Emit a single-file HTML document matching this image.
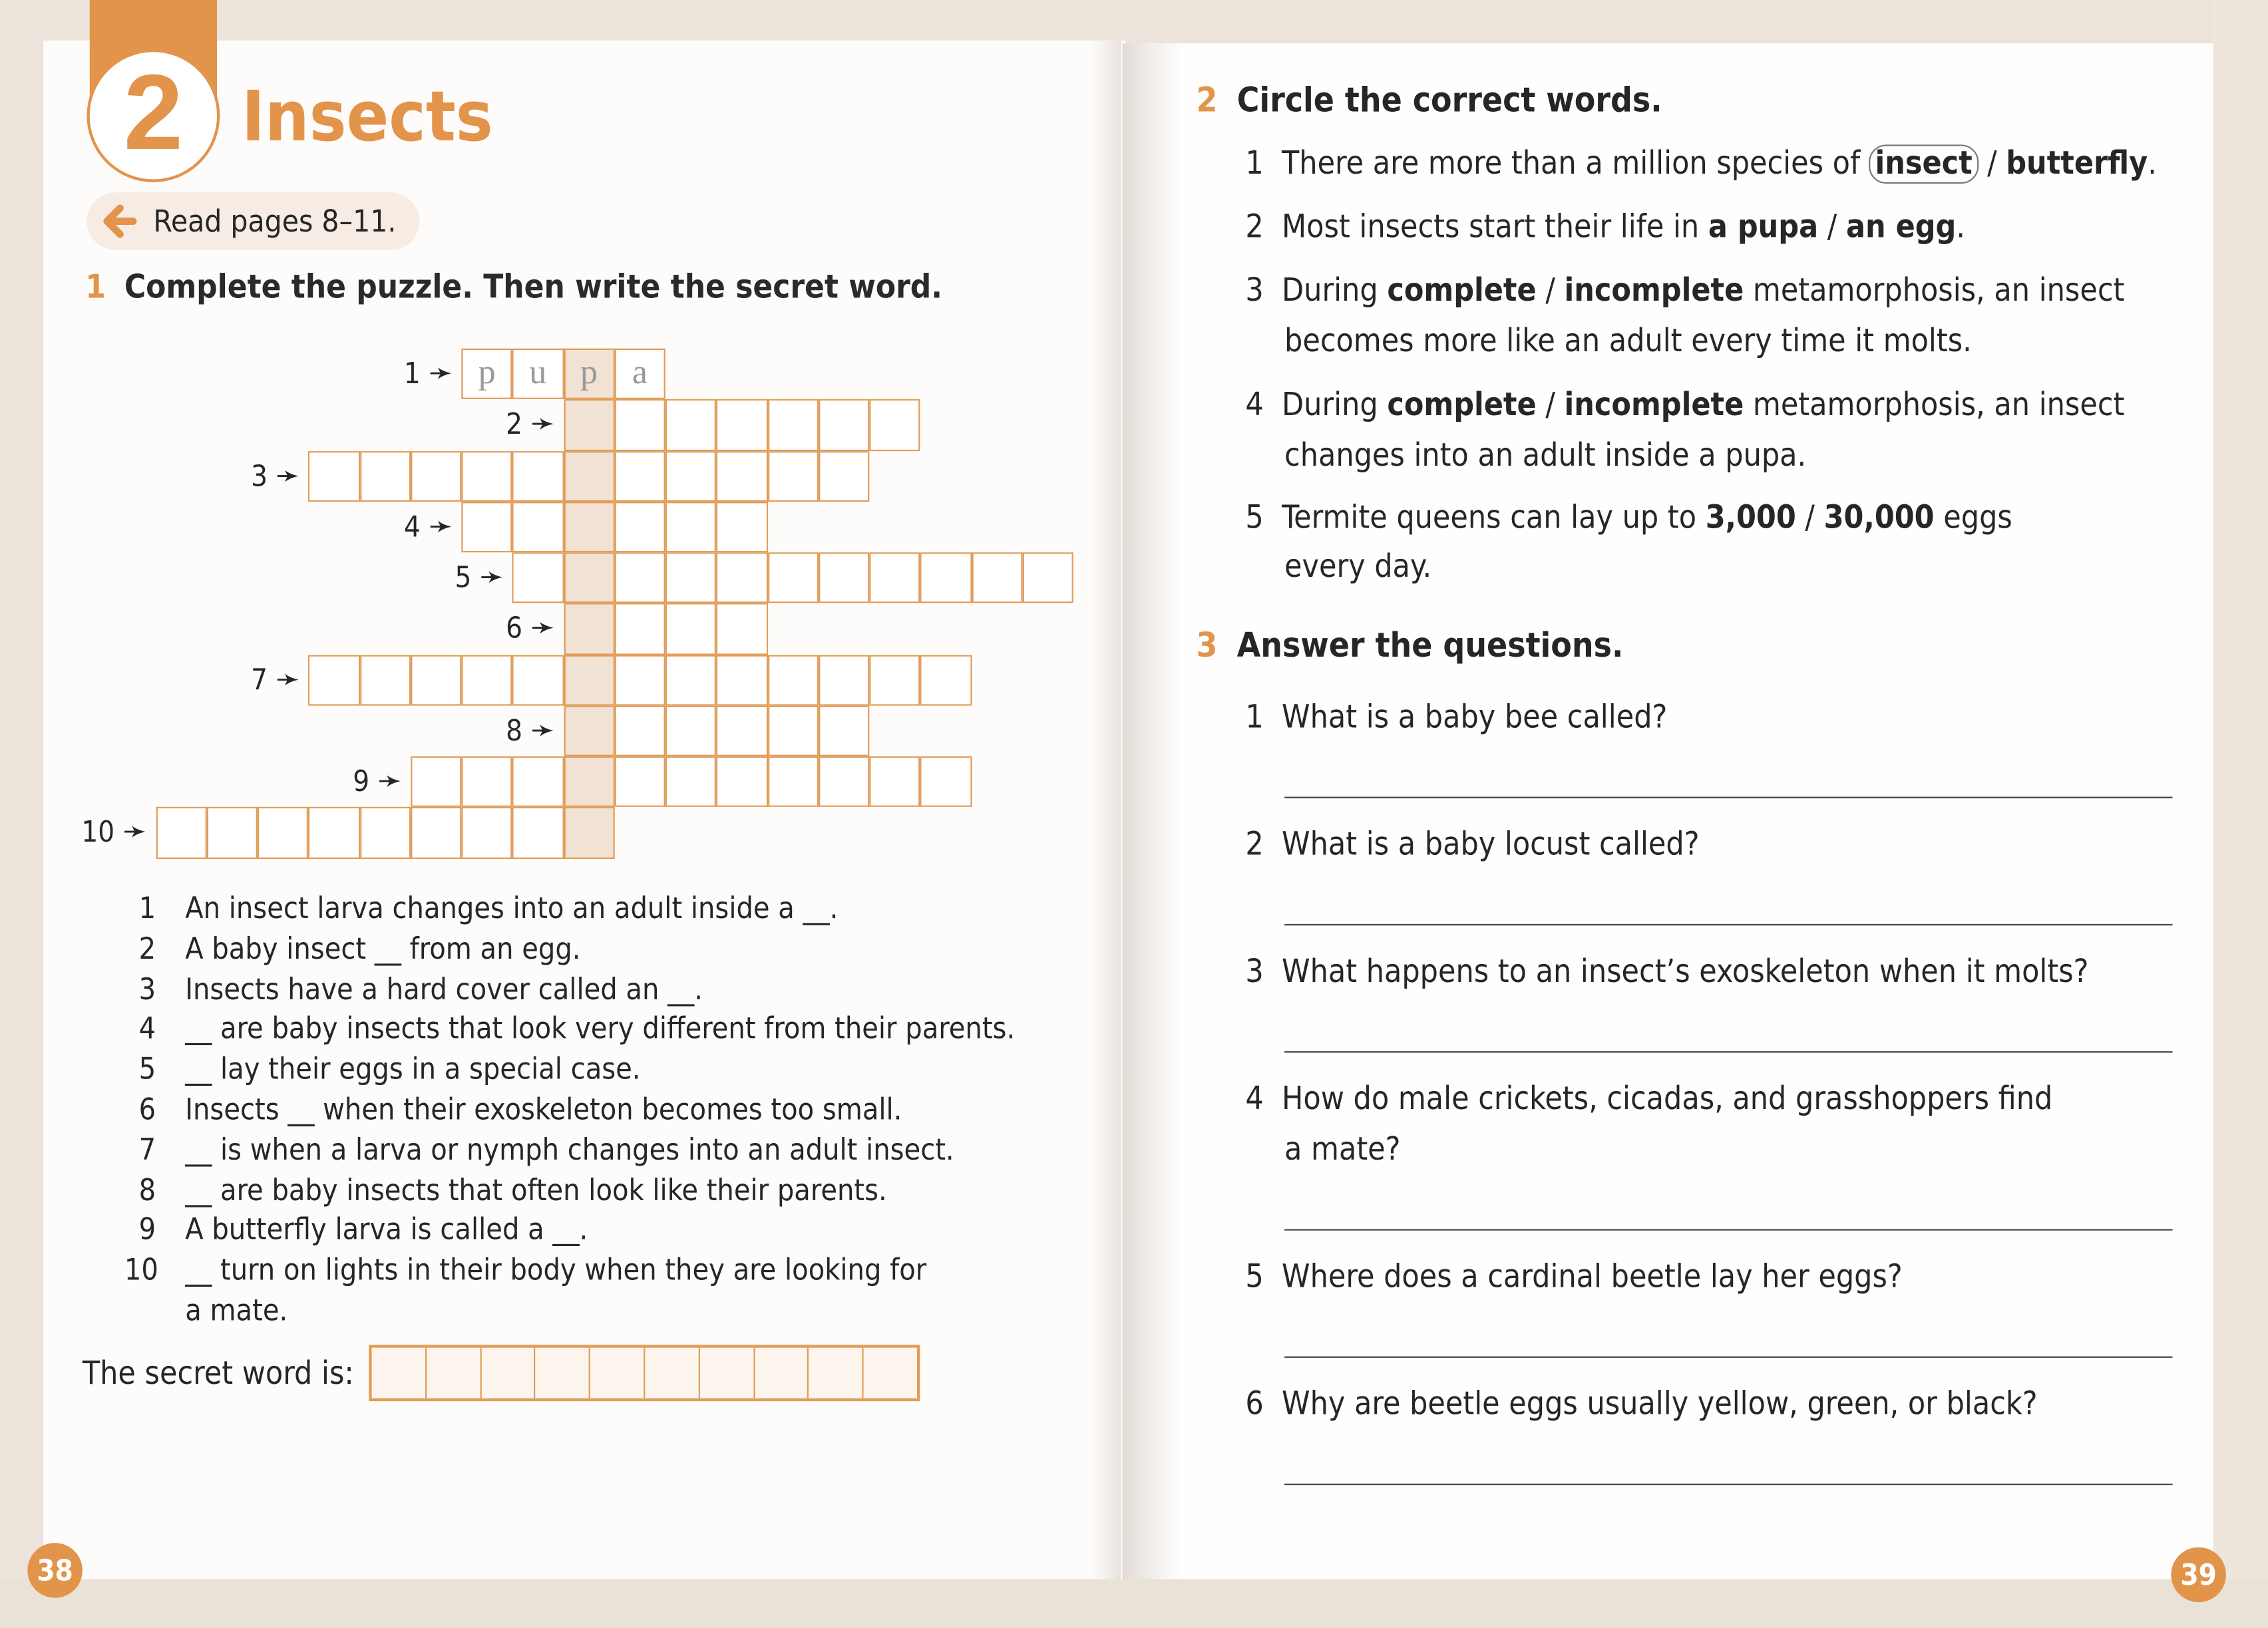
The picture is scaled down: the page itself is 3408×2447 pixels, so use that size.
<!DOCTYPE html>
<html><head><meta charset="utf-8">
<style>
html,body{margin:0;padding:0;}
body{width:3408px;height:2447px;overflow:hidden;background:#ece4da;}
#s{position:absolute;left:0;top:0;width:1568px;height:1126px;transform:scale(2.17347);transform-origin:0 0;
font-family:"Liberation Sans Narrow","DejaVu Sans Condensed","Liberation Sans",sans-serif;color:#262626;}
.a{position:absolute;white-space:nowrap;}
.t{font-size:21px;line-height:30px;}
.r{font-size:22px;line-height:30px;}
.o{color:#e0954b;font-weight:bold;}
b{font-weight:bold;}
.cell{position:absolute;width:35.25px;height:35.25px;box-sizing:border-box;border:1.6px solid #e19c58;background:#fff;}
.hl{background:#f1e2d3;}
.ln{position:absolute;height:1.3px;background:#444;left:888px;width:614px;}
</style></head><body>
<div id="s">
<div class="a" style="left:30px;top:28px;width:748px;height:1064px;background:#fdfcfb;"></div>
<div class="a" style="left:755px;top:28px;width:20px;height:1064px;background:linear-gradient(90deg,#fdfcfb,#e8e2dc);"></div>
<div class="a" style="left:776px;top:30px;width:755px;height:1064px;background:#fefefe;"></div>
<div class="a" style="left:776px;top:30px;width:40px;height:1064px;background:linear-gradient(90deg,#e2dcd6,#fefefe);"></div>
<div class="a" style="left:1530px;top:0;width:38px;height:1126px;background:#efe6db;"></div>
<div class="a" style="left:0;top:1092px;width:1568px;height:34px;background:#ebe2d7;"></div>
<div class="a" style="left:62px;top:0;width:88px;height:80px;background:#e2944a;"></div>
<div class="a" style="left:60px;top:34px;width:88px;height:88px;border-radius:50%;background:#fff;border:2px solid #e2944a;"></div>
<div class="a" style="left:60px;top:28px;width:92px;text-align:center;font-family:'Liberation Sans',sans-serif;font-weight:bold;font-size:74px;line-height:100px;color:#e2944a;">2</div>
<div class="a" style="left:167px;top:46px;font-size:48px;line-height:70px;font-weight:bold;color:#e2944a;">Insects</div>
<div class="a" style="left:60px;top:133px;width:230px;height:40px;border-radius:20px;background:#f6ece3;"></div>
<svg class="a" style="left:68px;top:139px" width="30" height="28" viewBox="0 0 30 28"><path d="M24 14H7M15 5L6 14L15 23" stroke="#e2944a" stroke-width="5" fill="none" stroke-linecap="round" stroke-linejoin="round"/></svg>
<div class="a t" style="left:106px;top:138px;">Read pages 8–11.</div>
<div class="a" style="left:59px;top:184px;font-size:22.5px;line-height:30px;"><span class="o">1</span>&nbsp; <span style="font-weight:bold;color:#2a2a2a">Complete the puzzle. Then write the secret word.</span></div>
<div id="cw"></div>
<div class="a t" style="left:96px;top:615px;line-height:27.8px;font-size:20.5px;">
<div><span style="display:inline-block;width:32px">1</span>An insect larva changes into an adult inside a __.</div>
<div><span style="display:inline-block;width:32px">2</span>A baby insect __ from an egg.</div>
<div><span style="display:inline-block;width:32px">3</span>Insects have a hard cover called an __.</div>
<div><span style="display:inline-block;width:32px">4</span>__ are baby insects that look very different from their parents.</div>
<div><span style="display:inline-block;width:32px">5</span>__ lay their eggs in a special case.</div>
<div><span style="display:inline-block;width:32px">6</span>Insects __ when their exoskeleton becomes too small.</div>
<div><span style="display:inline-block;width:32px">7</span>__ is when a larva or nymph changes into an adult insect.</div>
<div><span style="display:inline-block;width:32px">8</span>__ are baby insects that often look like their parents.</div>
<div><span style="display:inline-block;width:32px">9</span>A butterfly larva is called a __.</div>
<div style="margin-left:-10px"><span style="display:inline-block;width:42px">10</span>__ turn on lights in their body when they are looking for</div>
<div><span style="display:inline-block;width:32px"></span>a mate.</div>
</div>
<div class="a" style="left:57px;top:936px;font-size:22px;line-height:30px;">The secret word is:</div>
<div class="a" style="left:255px;top:930px;width:381px;height:39px;box-sizing:border-box;border:2px solid #e19c58;background:#fbf5ee;display:flex;">
<div style="flex:1;border-right:1.5px solid #e19c58"></div><div style="flex:1;border-right:1.5px solid #e19c58"></div><div style="flex:1;border-right:1.5px solid #e19c58"></div><div style="flex:1;border-right:1.5px solid #e19c58"></div><div style="flex:1;border-right:1.5px solid #e19c58"></div><div style="flex:1;border-right:1.5px solid #e19c58"></div><div style="flex:1;border-right:1.5px solid #e19c58"></div><div style="flex:1;border-right:1.5px solid #e19c58"></div><div style="flex:1;border-right:1.5px solid #e19c58"></div><div style="flex:1"></div></div>
<div class="a" style="left:19px;top:1067px;width:38px;height:38px;border-radius:50%;background:#e2944a;color:#fff;font-weight:bold;font-size:20px;line-height:38px;text-align:center;">38</div>
<div class="a" style="left:1501px;top:1070px;width:38px;height:38px;border-radius:50%;background:#e2944a;color:#fff;font-weight:bold;font-size:20px;line-height:38px;text-align:center;">39</div>
<div class="a" style="left:827px;top:54px;font-size:23.5px;line-height:30px;"><span class="o">2</span>&nbsp; <b>Circle the correct words.</b></div>
<div class="a r" style="left:861px;top:99px;">1&nbsp;&nbsp;There are more than a million species of <b style="border:1.5px solid #777;border-radius:12px;padding:0 3px;">insect</b> / <b>butterfly</b>.</div>
<div class="a r" style="left:861px;top:143px;">2&nbsp;&nbsp;Most insects start their life in <b>a pupa</b> / <b>an egg</b>.</div>
<div class="a r" style="left:861px;top:187px;">3&nbsp;&nbsp;During <b>complete</b> / <b>incomplete</b> metamorphosis, an insect</div>
<div class="a r" style="left:888px;top:222px;">becomes more like an adult every time it molts.</div>
<div class="a r" style="left:861px;top:266px;">4&nbsp;&nbsp;During <b>complete</b> / <b>incomplete</b> metamorphosis, an insect</div>
<div class="a r" style="left:888px;top:301px;">changes into an adult inside a pupa.</div>
<div class="a r" style="left:861px;top:344px;">5&nbsp;&nbsp;Termite queens can lay up to <b>3,000</b> / <b>30,000</b> eggs</div>
<div class="a r" style="left:888px;top:378px;">every day.</div>
<div class="a" style="left:827px;top:431px;font-size:23.5px;line-height:30px;"><span class="o">3</span>&nbsp; <b>Answer the questions.</b></div>
<div class="a r" style="left:861px;top:482px;">1&nbsp;&nbsp;What is a baby bee called?</div>
<div class="ln" style="top:551px"></div>
<div class="a r" style="left:861px;top:570px;">2&nbsp;&nbsp;What is a baby locust called?</div>
<div class="ln" style="top:639px"></div>
<div class="a r" style="left:861px;top:658px;">3&nbsp;&nbsp;What happens to an insect’s exoskeleton when it molts?</div>
<div class="ln" style="top:727px"></div>
<div class="a r" style="left:861px;top:746px;">4&nbsp;&nbsp;How do male crickets, cicadas, and grasshoppers find</div>
<div class="a r" style="left:888px;top:781px;">a mate?</div>
<div class="ln" style="top:850px"></div>
<div class="a r" style="left:861px;top:869px;">5&nbsp;&nbsp;Where does a cardinal beetle lay her eggs?</div>
<div class="ln" style="top:938px"></div>
<div class="a r" style="left:861px;top:957px;">6&nbsp;&nbsp;Why are beetle eggs usually yellow, green, or black?</div>
<div class="ln" style="top:1026px"></div>
</div>
<script>
var rows=[[0,3],[2,8],[-3,7],[0,5],[1,11],[2,5],[-3,9],[2,7],[-1,9],[-6,2]];
var W=35.25,X0=319,Y0=241,h='';
var letters=['p','u','p','a'];
rows.forEach(function(r,i){
 var y=Y0+i*W;
 for(var c=r[0];c<=r[1];c++){
  var x=X0+c*W;
  h+='<div class="cell'+(c==2?' hl':'')+'" style="left:'+x+'px;top:'+y+'px">'+(i==0?'<span style="display:block;text-align:center;font-size:24px;line-height:32px;color:#999;font-family:\'Liberation Serif\',serif">'+letters[c]+'</span>':'')+'</div>';
 }
 var lx=X0+r[0]*W-6;
 h+='<div class="a" style="left:'+(lx-60)+'px;width:60px;text-align:right;top:'+(y+2)+'px;font-size:20px;line-height:30px;">'+(i+1)+' <span style="font-size:22px">➛</span></div>';
});
document.getElementById('cw').innerHTML=h;
</script>
</body></html>
